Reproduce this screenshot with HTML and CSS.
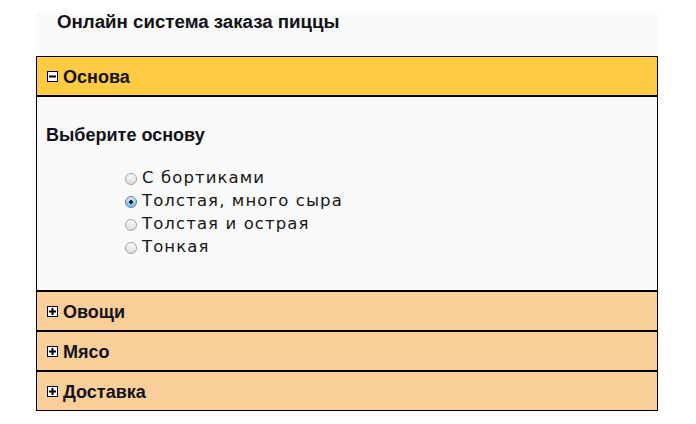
FILE: index.html
```html
<!DOCTYPE html>
<html lang="ru">
<head>
<meta charset="utf-8">
<title>Онлайн система заказа пиццы</title>
<link rel="stylesheet" href="styles.css">
</head>
<body>
<div class="app">
  <h1 class="title">Онлайн система заказа пиццы</h1>
  <div class="accordion">
    <div class="acc-head active">
      <svg class="toggle" width="11" height="11" viewBox="0 0 11 11"><rect x="0.5" y="0.5" width="10" height="10" fill="#fff" stroke="#000"/><rect x="2" y="4.5" width="7" height="2" fill="#000"/></svg>
      <span>Основа</span>
    </div>
    <div class="acc-body">
      <h3 class="question">Выберите основу</h3>
      <ul class="options">
        <li><label><input type="radio" name="base"><span>С бортиками</span></label></li>
        <li><label><input type="radio" name="base" checked><span>Толстая, много сыра</span></label></li>
        <li><label><input type="radio" name="base"><span>Толстая и острая</span></label></li>
        <li><label><input type="radio" name="base"><span>Тонкая</span></label></li>
      </ul>
    </div>
    <div class="acc-head">
      <svg class="toggle" width="11" height="11" viewBox="0 0 11 11"><rect x="0.5" y="0.5" width="10" height="10" fill="#fff" stroke="#000"/><rect x="2" y="4.5" width="7" height="2" fill="#000"/><rect x="4.5" y="2" width="2" height="7" fill="#000"/></svg>
      <span>Овощи</span>
    </div>
    <div class="acc-head">
      <svg class="toggle" width="11" height="11" viewBox="0 0 11 11"><rect x="0.5" y="0.5" width="10" height="10" fill="#fff" stroke="#000"/><rect x="2" y="4.5" width="7" height="2" fill="#000"/><rect x="4.5" y="2" width="2" height="7" fill="#000"/></svg>
      <span>Мясо</span>
    </div>
    <div class="acc-head">
      <svg class="toggle" width="11" height="11" viewBox="0 0 11 11"><rect x="0.5" y="0.5" width="10" height="10" fill="#fff" stroke="#000"/><rect x="2" y="4.5" width="7" height="2" fill="#000"/><rect x="4.5" y="2" width="2" height="7" fill="#000"/></svg>
      <span>Доставка</span>
    </div>
  </div>
</div>
</body>
</html>
```

FILE: styles.css
```css
html, body {
  margin: 0;
  padding: 0;
  background: #fff;
}
body {
  font-family: "Liberation Sans", Arial, sans-serif;
  color: #111118;
}
.app {
  width: 622px;
  margin: 12px 0 0 36px;
  background: #fafafa;
}
.title {
  margin: 0;
  padding: 1px 0 0 21px;
  height: 43px;
  font-size: 18.7px;
  line-height: 18px;
  font-weight: bold;
}
.accordion {
  display: flex;
  flex-direction: column;
}
.acc-head {
  display: flex;
  align-items: center;
  gap: 5px;
  height: 36px;
  padding: 2px 0 0 10px;
  border: 1px solid #000;
  background: #fbcf99;
  font-size: 18px;
  line-height: 36px;
  font-weight: bold;
}
.acc-head.active {
  background: #fecb42;
}
.toggle {
  flex: none;
  margin-top: -2px;
}
.acc-body {
  border: 1px solid #000;
  padding: 28px 0 32px 9px;
  background: #fafafa;
}
.question {
  margin: 0 0 21px;
  font-size: 18px;
  line-height: 20px;
  font-weight: bold;
}
.options {
  list-style: none;
  margin: 0;
  padding: 0 0 0 79px;
  font-family: "DejaVu Sans", Verdana, sans-serif;
  font-size: 16.5px;
  letter-spacing: 1.1px;
  line-height: 23px;
  color: #151515;
}
.options label {
  display: flex;
  align-items: center;
  gap: 5px;
}
.options input {
  appearance: none;
  -webkit-appearance: none;
  margin: 3px 0 0;
  width: 12px;
  height: 12px;
  border-radius: 50%;
  border: 1px solid #a0a0a0;
  background: linear-gradient(#fdfdfd, #dcdcdc);
  box-sizing: border-box;
}
.options input:checked {
  border-color: #5a7fa6;
  background: radial-gradient(circle, #1b2430 0 1.6px, transparent 2.1px), linear-gradient(#d6e8fa, #7db2e6);
}
```
